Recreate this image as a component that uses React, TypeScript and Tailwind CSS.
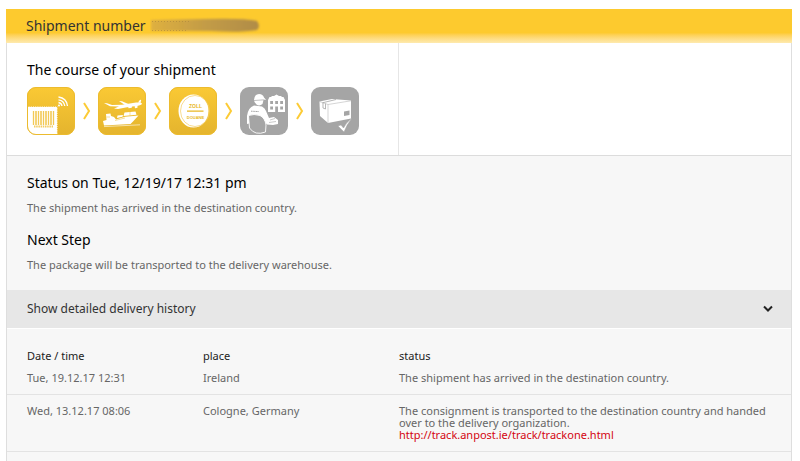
import { useState, type ReactNode } from 'react';

interface HistoryEntry {
  time: string;
  place: string;
  status: string;
  link?: string;
}

const history: HistoryEntry[] = [
  {
    time: 'Tue, 19.12.17 12:31',
    place: 'Ireland',
    status: 'The shipment has arrived in the destination country.',
  },
  {
    time: 'Wed, 13.12.17 08:06',
    place: 'Cologne, Germany',
    status:
      'The consignment is transported to the destination country and handed over to the delivery organization.',
    link: 'http://track.anpost.ie/track/trackone.html',
  },
];

const bars = [7, 9, 10, 12, 14, 15, 17, 19, 20, 22, 24, 25, 27];

function BarcodeIcon() {
  return (
    <g>
      <path d="M0.5 19.5H30.5V48H10Q0.5 47 0.5 38Z" fill="#fff" />
      <path
        d="M0.5 19.5H30.5V48"
        fill="none"
        stroke="#f0be30"
        strokeWidth="1.2"
        strokeDasharray="1 1.2"
      />
      {bars.map((x, i) => (
        <path
          key={x}
          d={`M${x - 0.5} 24V38`}
          stroke="#f2c956"
          strokeWidth={i % 3 === 0 ? 1.3 : 0.8}
        />
      ))}
      <path d="M7 39.5H26" stroke="#f2cb62" strokeWidth="2" strokeDasharray="1.5 0.7" />
      <g fill="none" stroke="#fff" strokeWidth="1.3">
        <path d="M31.5 15.5Q34.5 16 35 19" />
        <path d="M31.5 12.8Q37 13.5 37.8 19" />
        <path d="M31.5 10Q39.5 11 40.5 19" />
      </g>
      <circle cx="32" cy="18.5" r="1" fill="#fff" />
    </g>
  );
}

function TransportIcon() {
  return (
    <g fill="#fff">
      <path d="M6 16L9 16.3L14 18L24 17.8L38 15.6Q43 15 44 16.6Q44 18.2 40 18.8L29 20.2L20 22L16 21.6L21 19.6L12 19.3Z" />
      <path d="M21 14L24 14.2L31 17.2L27 18ZM30 19L34 18.5L33.8 20.8L30.5 21.2ZM36.5 18.5L39.5 18L39.5 20.8L37 21.2ZM40 15.5L42 12.8L43.2 13L42.5 16Z" />
      <path d="M5 34L8.5 33L8 27L12.5 26.5L13 29L16 30L18 32.5L27 29.8L40.5 28.5L35 34.5L32.5 37L6 38.5Z" />
      <path d="M26.5 25.5L37.5 24.6L38.5 27.7L25.5 29ZM19.5 28.5L25 28L24.5 29.8L19 31Z" />
      <path d="M8.5 30H12M32 25V28.3M17 33.5L27 31" fill="none" stroke="#efbf35" strokeWidth="0.5" />
      <path d="M6 39.6L42 37.8" fill="none" stroke="#fff" strokeWidth="0.6" />
    </g>
  );
}

function CustomsIcon() {
  return (
    <g>
      <ellipse cx="24.5" cy="24" rx="15" ry="16.5" fill="#fff" />
      <ellipse cx="26" cy="24" rx="14.5" ry="15.5" fill="none" stroke="#f3cd62" strokeWidth="0.7" />
      <g fill="#e8b724" fontFamily="Liberation Sans, sans-serif" fontWeight="bold" textAnchor="middle">
        <text x="26.5" y="20.5" fontSize="5">ZOLL</text>
        <text x="26.5" y="31.5" fontSize="4">DOUANE</text>
      </g>
      <path d="M18 24.2H34.5" stroke="#e8b724" strokeWidth="1.2" />
    </g>
  );
}

function CourierIcon() {
  return (
    <g fill="#fff">
      <path d="M28 13L29.5 10H31.5V9H34L36.5 7.5L39 9H41.5V10H43.5L45 13V25H28Z" />
      <path
        d="M30.2 14H33V17H30.2ZM35.2 14H38V17H35.2ZM40.2 14H43V17H40.2ZM30.2 19.5H33V22.5H30.2ZM35.2 19.5H38V25H35.2ZM40.2 19.5H43V22.5H40.2Z"
        fill="#a5a5a5"
      />
      <path d="M14 13Q14.5 7 19 7Q23 7 24 10.5L26 12.8L23.5 13L22.5 17Q19.5 19.5 16.5 17.5L14.5 15Z" />
      <path d="M14 13.5L24.5 12.8" stroke="#a5a5a5" strokeWidth="0.7" />
      <path d="M7 29Q8 20.5 14 18.5L22 19.5Q25 21 26 24L29 31L34 30L38 33L38 37L33 38L27 37.5L23 33L7 37Z" />
      <path d="M8.5 28.5Q14 26.5 20 28.5Q25 31 26 38L25.5 45Q15 49 9.5 41Z" fill="#a5a5a5" stroke="#fff" strokeWidth="0.9" />
      <path d="M11 24.2L19 24.6" stroke="#a5a5a5" strokeWidth="1" strokeDasharray="1.2 0.4" />
      <path d="M30 33L35 31.5M29 35.5L36 34.5" stroke="#a5a5a5" strokeWidth="0.6" />
    </g>
  );
}

function ParcelIcon() {
  return (
    <g>
      <path d="M8.5 14.5L21 12L40 13.5V31.5L17 36L9 29Z" fill="#fff" />
      <path d="M8.5 14.5L17 17.5L40 13.8M17 17.5V36" fill="none" stroke="#b8b8b8" strokeWidth="0.6" />
      <path d="M11.5 15.8L25 12.5M12 15.8V21L14.5 22V16.6" fill="none" stroke="#a5a5a5" strokeWidth="0.8" />
      <path d="M33 24.5L38.5 23.5V28L33 29Z" fill="#a5a5a5" />
      <path d="M27 39L30 38L32.5 41Q35.5 35 41 31Q36 37 33 45Z" fill="#fff" stroke="#a5a5a5" strokeWidth="0.5" />
    </g>
  );
}

const steps: { label: string; done: boolean; icon: ReactNode }[] = [
  { label: 'Announced', done: true, icon: <BarcodeIcon /> },
  { label: 'In transport', done: true, icon: <TransportIcon /> },
  { label: 'Customs', done: true, icon: <CustomsIcon /> },
  { label: 'Out for delivery', done: false, icon: <CourierIcon /> },
  { label: 'Delivered', done: false, icon: <ParcelIcon /> },
];

function StepIcon({ label, done, children }: { label: string; done: boolean; children: ReactNode }) {
  return (
    <svg viewBox="0 0 48 48" className="size-12" role="img" aria-label={label}>
      <defs>
        <linearGradient id="step-done" x1="0" y1="0" x2="0" y2="1">
          <stop offset="0" stopColor="#fac934" />
          <stop offset="1" stopColor="#e4b42e" />
        </linearGradient>
        <clipPath id="step-shape">
          <rect width="48" height="48" rx="9" />
        </clipPath>
      </defs>
      <g clipPath="url(#step-shape)">
        <rect width="48" height="48" fill={done ? 'url(#step-done)' : '#a5a5a5'} />
        {children}
      </g>
      {done && (
        <rect x="0.5" y="0.5" width="47" height="47" rx="8.5" fill="none" stroke="#ecbb2e" />
      )}
    </svg>
  );
}

// blurred out shipment number
function HiddenNumber() {
  return (
    <svg viewBox="0 0 112 18" className="h-[18px] w-28" role="img" aria-label="hidden">
      <defs>
        <filter id="smear" x="-10%" y="-30%" width="120%" height="160%">
          <feGaussianBlur stdDeviation="1.3" />
        </filter>
        <linearGradient id="smear-tone">
          <stop offset="0" stopColor="#dfb040" />
          <stop offset="0.5" stopColor="#c39c46" />
          <stop offset="1" stopColor="#b08c46" />
        </linearGradient>
      </defs>
      <path d="M1 3L55 2Q95 1 107 4Q111 9 107 13Q90 16 60 14L1 14Z" fill="url(#smear-tone)" filter="url(#smear)" />
      <path d="M2 4.5H40M2 13.5H36" stroke="#a8843a" strokeOpacity="0.6" strokeWidth="1" strokeDasharray="1 2" />
    </svg>
  );
}

export default function App() {
  const [open, setOpen] = useState(true);

  return (
    <main className="min-h-screen bg-white px-1.5 pt-[9px] pr-2 font-['Noto_Sans',sans-serif] text-[11px] leading-3 text-[#666]">
      <header className="flex h-[34px] items-center gap-1 bg-linear-to-b from-[#fdca2e] from-70% to-[#feeaae] pl-5">
        <h1 className="text-sm leading-5 text-[#333]">Shipment number</h1>
        <HiddenNumber />
      </header>

      <div className="border-x border-[#dedede] bg-[#f7f7f7] pb-4">
        <section className="grid grid-cols-2 border-b border-[#dcdcdc] bg-white">
          <div className="border-r border-[#e6e6e6] px-5 pt-[17px] pb-5">
            <h2 className="text-sm leading-5 text-black">The course of your shipment</h2>
            <ol className="mt-[7px] flex items-center">
              {steps.map((step, i) => (
                <li key={step.label} className="flex items-center">
                  {i > 0 && (
                    <svg viewBox="0 0 23 20" className="h-5 w-[23px]" aria-hidden="true">
                      <path d="M9 2L14 10L9 18" fill="none" stroke="#fccb35" strokeWidth="2" />
                    </svg>
                  )}
                  <StepIcon label={step.label} done={step.done}>
                    {step.icon}
                  </StepIcon>
                </li>
              ))}
            </ol>
          </div>
        </section>

        <section className="px-5 pt-[17px] pb-[17px]">
          <h2 className="text-sm leading-5 text-black">Status on Tue, 12/19/17 12:31 pm</h2>
          <p className="mt-[7px] leading-4">The shipment has arrived in the destination country.</p>
          <h2 className="mt-[14px] text-sm leading-5 text-black">Next Step</h2>
          <p className="mt-[7px] leading-4">The package will be transported to the delivery warehouse.</p>
        </section>

        <button
          type="button"
          aria-expanded={open}
          onClick={() => setOpen(!open)}
          className="flex h-[39px] w-full cursor-pointer items-center justify-between border-b border-white bg-[#e7e7e7] pr-[18px] pl-5 text-xs text-[#333]"
        >
          Show detailed delivery history
          <svg viewBox="0 0 10 8" className="h-2 w-2.5" aria-hidden="true">
            <path d="M1 1.5L5 5.5L9 1.5" fill="none" stroke="#222" strokeWidth="2" />
          </svg>
        </button>

        {open && (
          <table className="mt-[21px] w-full table-fixed border-collapse text-left">
            <thead className="text-[#222]">
              <tr>
                <th className="w-1/4 pl-5 font-normal">Date / time</th>
                <th className="w-1/4 font-normal">place</th>
                <th className="w-1/2 font-normal">status</th>
              </tr>
            </thead>
            <tbody>
              {history.map((entry) => (
                <tr key={entry.time} className="border-b border-[#e3e3e3] align-top">
                  <td className="py-2.5 pl-5">{entry.time}</td>
                  <td className="py-2.5">{entry.place}</td>
                  <td className="py-2.5 pr-5">
                    {entry.status}
                    {entry.link && (
                      <a href={entry.link} className="block text-[#d40511]">
                        {entry.link}
                      </a>
                    )}
                  </td>
                </tr>
              ))}
            </tbody>
          </table>
        )}
      </div>
    </main>
  );
}
